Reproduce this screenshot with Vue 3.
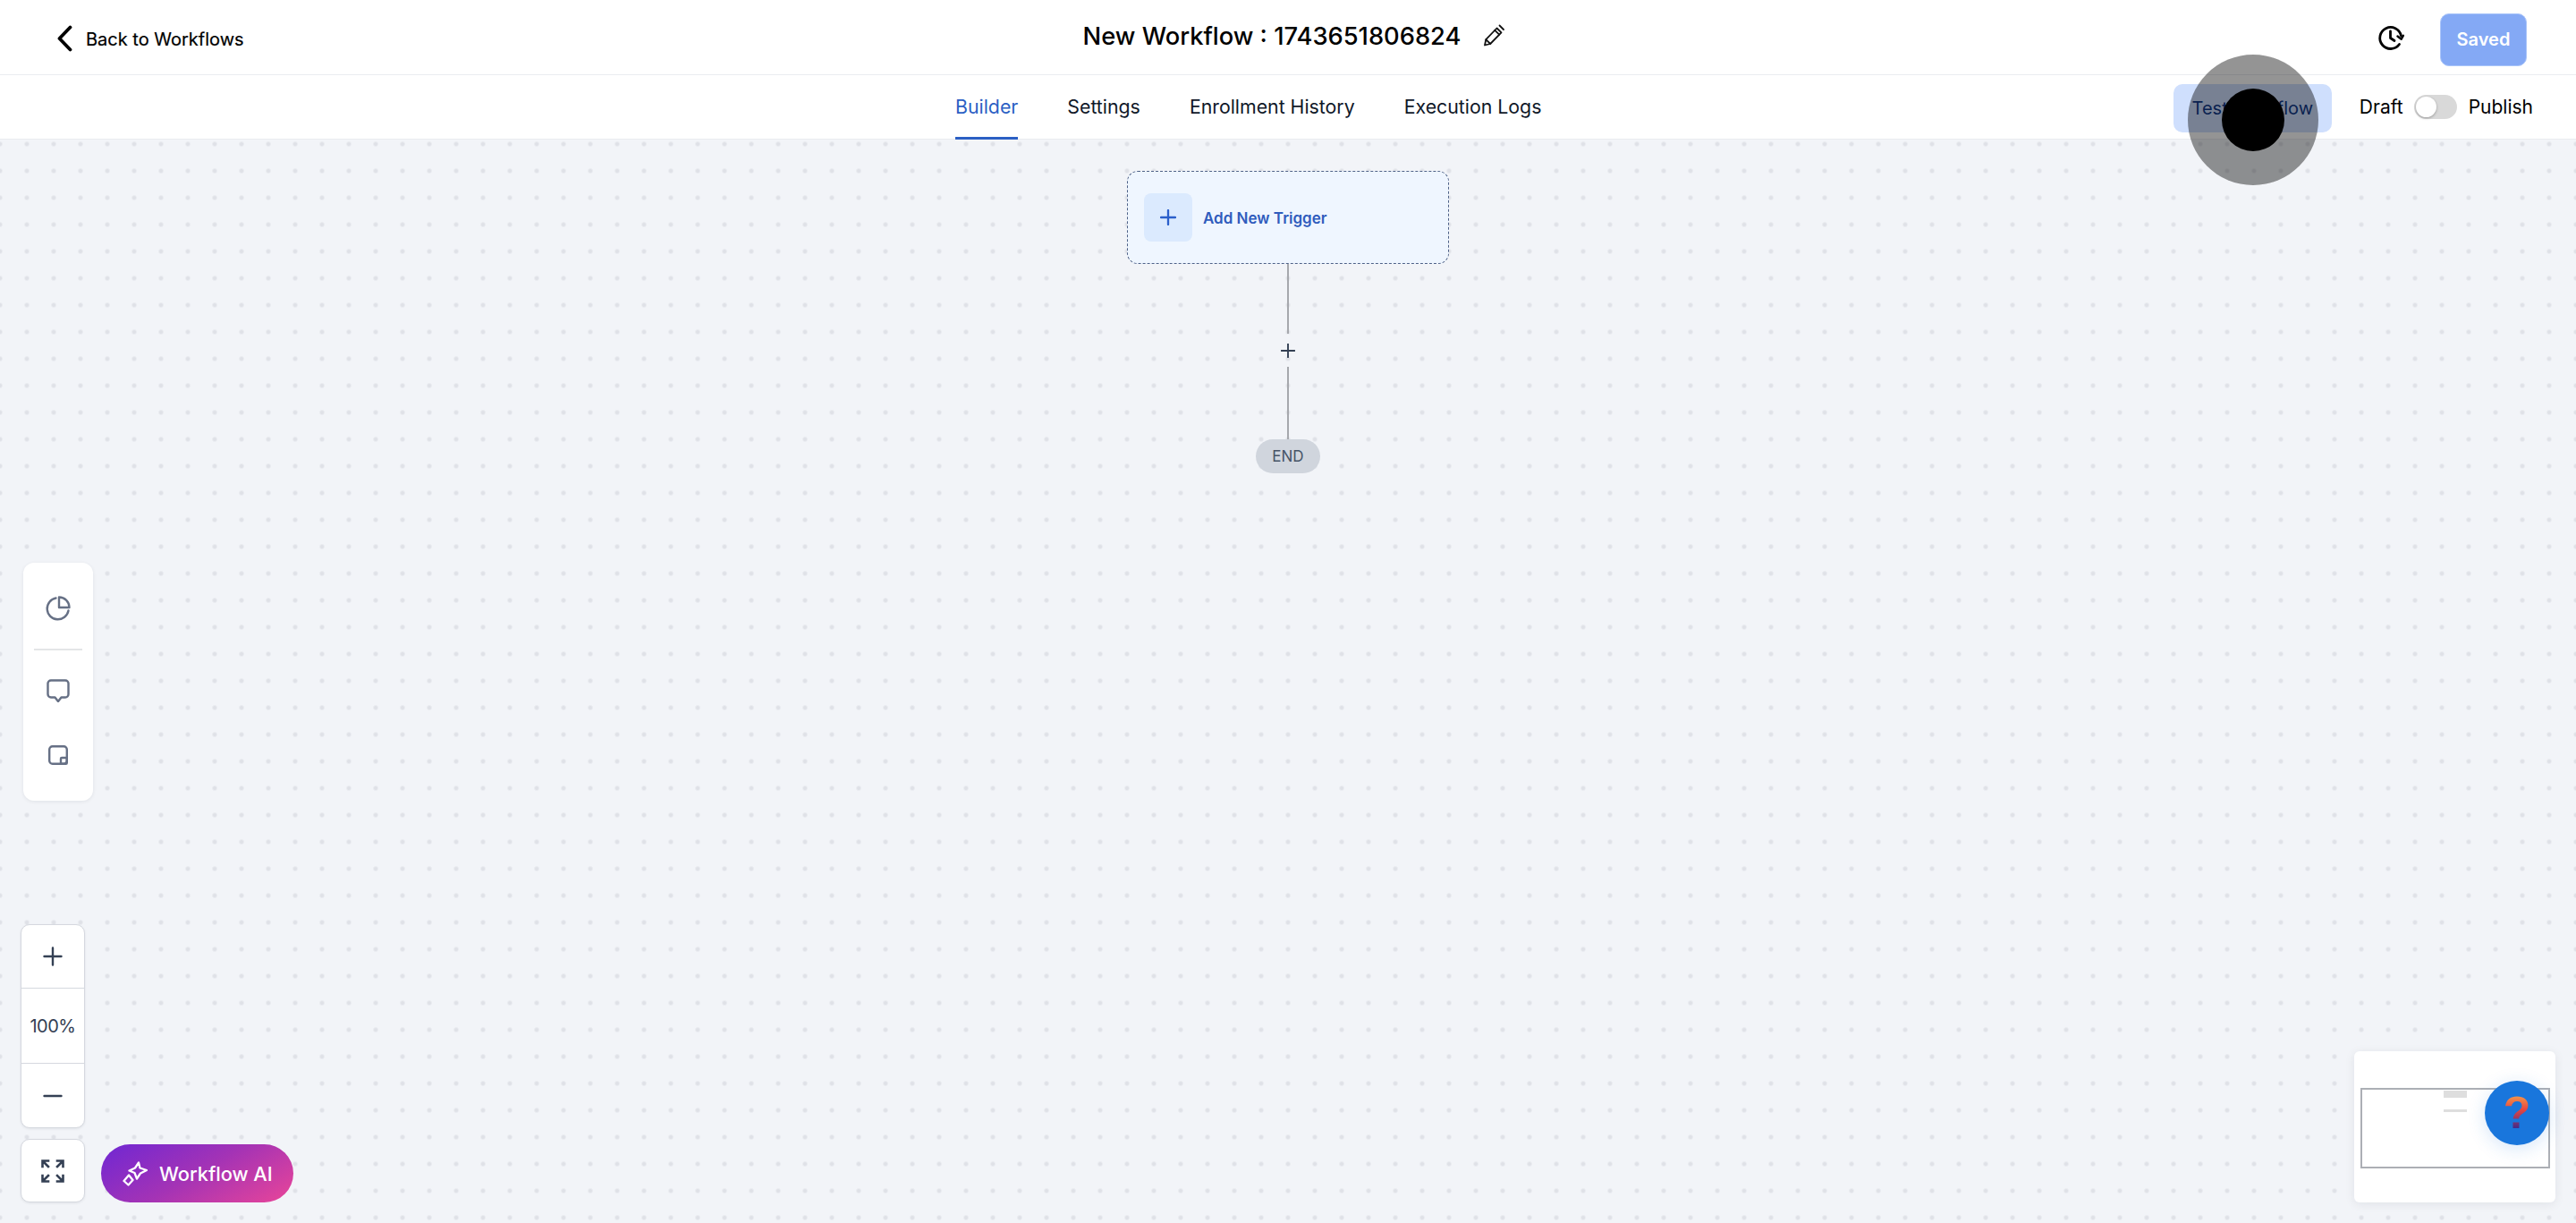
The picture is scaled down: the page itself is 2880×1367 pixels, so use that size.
<script setup>
const tabs = ['Builder', 'Settings', 'Enrollment History', 'Execution Logs']
</script>

<template>
  <div class="page">
    <header class="top">
      <a class="back">
        <svg width="18" height="30" viewBox="0 0 18 30" fill="none"><path d="M15.500 2.500 3.500 15l12 12.500" stroke="#000" stroke-width="3.800" stroke-linecap="round" stroke-linejoin="round"/></svg>
        <span>Back to Workflows</span>
      </a>
      <div class="title">
        <h1>New Workflow : 1743651806824</h1>
        <svg width="26" height="26" viewBox="0 0 26 26" fill="none" stroke="#111" stroke-width="1.800" stroke-linejoin="round" stroke-linecap="round"><path d="M3 23.500l1.300-6.300L16.500 4.500l5 4.800L9.200 22z"/><path d="M4.300 17.200 9.200 22M14.200 6.900l5 4.800M19.500 1.500l4.500 4.500"/></svg>
      </div>
      <div class="actions">
        <svg width="30" height="30" viewBox="0 0 30 30" fill="none" stroke="#000" stroke-width="2.800" stroke-linecap="round" stroke-linejoin="round"><path d="M26.500 13A12 12 0 1 0 24.500 22.500"/><path d="M14.500 8v7.500l4.500 3"/><path d="m22.500 13.500 4.200 3.200 2.300-4" stroke-width="2.400"/></svg>
        <button class="saved">Saved</button>
      </div>
    </header>

    <nav class="sub">
      <div class="tabs">
        <a v-for="(t, i) in tabs" :key="t" class="tab" :class="{ active: i === 0 }">{{ t }}</a>
      </div>
      <div class="controls">
        <button class="test">Test Workflow</button>
        <span class="lbl">Draft</span>
        <span class="toggle"><i></i></span>
        <span class="lbl">Publish</span>
      </div>
    </nav>

    <main class="canvas">
      <div class="flow">
        <div class="trigger">
          <span class="tbox">
            <svg width="18" height="18" viewBox="0 0 18 18" stroke="#2B5FCB" stroke-width="2.300" stroke-linecap="round"><path d="M9 1v16M1 9h16"/></svg>
          </span>
          <span class="ttext">Add New Trigger</span>
        </div>
        <div class="line l1"></div>
        <svg class="addp" width="16" height="16" viewBox="0 0 16 16" stroke="#344054" stroke-width="1.900" stroke-linecap="round"><path d="M8 .5v15M.5 8h15"/></svg>
        <div class="line l2"></div>
        <div class="end">END</div>
      </div>

      <aside class="tools">
        <svg width="28" height="28" viewBox="0 0 28 28" fill="none" stroke="#667085" stroke-width="2.400" stroke-linecap="round" stroke-linejoin="round"><path d="M11.500 2.500A12 12 0 1 0 25.500 16.500"/><path d="M15 1.500A11.500 11.500 0 0 1 26.500 13H15z"/></svg>
        <hr />
        <svg class="t2" width="26" height="26" viewBox="0 0 26 26" fill="none" stroke="#667085" stroke-width="2.400" stroke-linejoin="round"><path d="M5 1.500h16A3.500 3.500 0 0 1 24.500 5v12a3.500 3.500 0 0 1-3.500 3.500h-4.500L13 25l-3.500-4.500H5A3.500 3.500 0 0 1 1.500 17V5A3.500 3.500 0 0 1 5 1.500z"/></svg>
        <svg class="t3" width="22" height="22" viewBox="0 0 22 22" fill="none" stroke="#667085" stroke-width="2.400" stroke-linejoin="round"><rect x="1.200" y="1.200" width="19.600" height="19.600" rx="3.500"/><rect x="14" y="14" width="6.800" height="6.800" rx="1"/></svg>
      </aside>

      <div class="zoom">
        <button class="zbtn z1"><svg width="22" height="22" viewBox="0 0 22 22" stroke="#344054" stroke-width="2.400" stroke-linecap="round"><path d="M11 1.500v19M1.500 11h19"/></svg></button>
        <div class="pct">100%</div>
        <button class="zbtn z3"><svg width="22" height="4" viewBox="0 0 22 4" stroke="#344054" stroke-width="2.400" stroke-linecap="round"><path d="M1.500 2h19"/></svg></button>
      </div>

      <button class="fit">
        <svg width="26" height="26" viewBox="0 0 26 26" fill="none" stroke="#344054" stroke-width="2.600" stroke-linecap="square"><path d="M1.500 8V1.500H8M2 2l6 6M24.500 8V1.500H18M24 2l-6 6M1.500 18v6.500H8M2 24l6-6M24.500 18v6.500H18M24 24l-6-6"/></svg>
      </button>

      <button class="ai">
        <svg width="28" height="28" viewBox="0 0 28 28" fill="none" stroke="#fff" stroke-width="2.300" stroke-linejoin="round"><path d="M18 1.500 19.500 7.500 27 10 20 13.500 16 19.500 13.500 13 7.500 10.500 14 7.500z"/><path d="M7 15.500 11.500 21 6.500 26.500 1.500 22z"/></svg>
        <span>Workflow AI</span>
      </button>

      <div class="minimap">
        <div class="view">
          <b class="m1"></b>
          <b class="m2"></b>
        </div>
      </div>
      <div class="help"><span>?</span></div>
      <div class="pointer"><i></i></div>
    </main>
  </div>
</template>

<style>
html, body { margin: 0; background: #fff; overflow: hidden; }
</style>

<style scoped>
.page { width: 2880px; height: 1367px; display: flex; flex-direction: column; font-family: Inter, "Noto Sans", sans-serif; color: #000; overflow: hidden; }
.top { height: 83px; border-bottom: 1px solid #eaecf0; display: grid; grid-template-columns: 1fr auto 1fr; align-items: center; background: #fff; box-sizing: content-box; }
.back { display: flex; align-items: center; gap: 15px; padding-left: 63px; font-size: 20px; font-weight: 400; margin-top: 2px; }
.back span { margin-top: 2px; -webkit-text-stroke: 0.2px #000; }
.title { display: flex; align-items: center; gap: 24px; padding-left: 14px; margin-top: -3px; }
h1 { margin: 0; font-size: 27.300px; font-weight: 450; }
.actions { display: flex; align-items: center; justify-content: flex-end; gap: 40px; padding-right: 55px; }
.saved { width: 97px; height: 59px; margin-top: 5px; border: 1px solid #a9c4f9; border-radius: 10px; background: #84a9f5; color: #fff; font: 600 20px Inter, sans-serif; }
.sub { height: 71px; border-bottom: 1px solid #eaecf0; background: #fff; display: flex; justify-content: space-between; align-items: stretch; padding-left: 1068px; }
.tabs { display: flex; gap: 55px; }
.tab { display: flex; align-items: center; height: 72px; box-sizing: border-box; font-size: 21.300px; font-weight: 400; color: #101828; padding-top: 1px; border-bottom: 3px solid transparent; margin-bottom: -1px; }
.tab.active { color: #2b5fc4; border-bottom-color: #2b5fc4; }
.controls { display: flex; align-items: center; padding-right: 48px; }
.test { width: 177px; height: 54px; margin-top: 2px; margin-right: 31px; border: 0; border-radius: 10px; background: #cfdffd; color: #123a8b; font: 400 20px Inter, sans-serif; white-space: nowrap; padding: 0; }
.lbl { font-size: 21px; font-weight: 400; }
.toggle { width: 48px; height: 27px; margin: 0 13px 0 12px; border-radius: 14px; background: #d9d9d9; display: flex; align-items: center; padding-left: 2px; box-sizing: border-box; }
.toggle i { width: 23px; height: 23px; border-radius: 50%; background: #fff; box-shadow: 0 1px 3px rgba(0,0,0,.3); }
.canvas { position: relative; flex: 1; background-color: #f2f4f8; background-image: radial-gradient(circle, #dfe1e7 1.400px, #f2f4f8 3.400px); background-size: 30px 30px; background-position: -15px -10px; }
.flow { display: flex; flex-direction: column; align-items: center; padding-top: 35px; }
.trigger { width: 360px; height: 104px; box-sizing: border-box; border: 1px dashed #4f6288; border-radius: 12px; background: #eff6ff; display: flex; align-items: center; padding-left: 18px; gap: 12px; }
.tbox { width: 54px; height: 54px; border-radius: 8px; background: #dbeafe; display: flex; align-items: center; justify-content: center; }
.ttext { font-size: 17px; font-weight: 600; color: #2f5cbd; margin-top: 1px; }
.line { width: 2px; background: #a6a8ad; }
.l1 { height: 78px; }
.addp { margin: 11px 0 10px; }
.l2 { height: 81px; }
.end { width: 72px; height: 38px; border-radius: 19px; background: #d0d5dd; color: #475467; font-size: 17px; display: flex; align-items: center; justify-content: center; }
.tools { position: absolute; left: 26px; top: 473px; width: 78px; height: 266px; border-radius: 12px; background: #fff; box-shadow: 0 1px 4px rgba(16,24,40,.08); display: flex; flex-direction: column; align-items: center; padding-top: 37px; box-sizing: border-box; }
.tools hr { width: 54px; height: 2px; border: 0; margin: 31px 0 0; background: #e4e5e7; }
.t2 { margin-top: 32px; }
.t3 { margin-top: 48px; }
.zoom { position: absolute; left: 23px; top: 877px; width: 72px; height: 228px; box-sizing: border-box; border: 1px solid #d5d8df; border-radius: 10px; background: #fff; display: flex; flex-direction: column; box-shadow: 0 1px 3px rgba(16,24,40,.08); }
.zbtn { border: 0; background: none; padding: 0; display: flex; align-items: center; justify-content: center; }
.z1 { height: 70px; border-bottom: 1px solid #d5d8df; box-sizing: content-box; }
.pct { height: 83px; display: flex; align-items: center; justify-content: center; font-size: 20px; letter-spacing: -0.5px; color: #344054; }
.z3 { flex: 1; border-top: 1px solid #d5d8df; }
.fit { position: absolute; left: 23px; top: 1117px; width: 72px; height: 71px; box-sizing: border-box; border: 1px solid #d5d8df; border-radius: 10px; background: #fff; display: flex; align-items: center; justify-content: center; padding: 0; box-shadow: 0 1px 3px rgba(16,24,40,.08); }
.ai { position: absolute; left: 113px; top: 1123px; width: 215px; height: 65px; border: 0; border-radius: 33px; background: linear-gradient(150deg, #6f27d3 0%, #a433b5 50%, #ea4598 100%); color: #fff; font: 500 21.800px Inter, sans-serif; display: flex; align-items: center; gap: 13px; padding: 0 0 0 24px; box-sizing: border-box; }
.minimap { position: absolute; left: 2632px; top: 1019px; width: 225px; height: 169px; border-radius: 6px; background: #fff; box-shadow: 0 2px 12px rgba(16,24,40,.08); display: flex; align-items: center; justify-content: center; }
.view { width: 212px; height: 90px; box-sizing: border-box; border: 2px solid #acafb5; margin-top: 2px; padding: 1px 0 0 91px; display: flex; flex-direction: column; }
.m1 { width: 26px; height: 8px; background: #dedede; }
.m2 { width: 26px; height: 3px; margin-top: 13px; background: #dedede; }
.help { position: absolute; left: 2778px; top: 1052px; width: 72px; height: 72px; border-radius: 50%; background: #1976dc; box-shadow: 0 4px 20px rgba(25,118,220,.18); display: flex; align-items: center; justify-content: center; }
.help span { font: 700 50px "Liberation Sans", sans-serif; line-height: 1; background: linear-gradient(180deg, #f5a04c 8%, #e8463f 42%, #3f2a8c 85%); -webkit-background-clip: text; background-clip: text; color: transparent; }
.pointer { position: absolute; left: 2446px; top: -95px; width: 146px; height: 146px; border-radius: 50%; background: rgba(0,0,0,.42); display: flex; align-items: center; justify-content: center; }
.pointer i { width: 70px; height: 70px; border-radius: 50%; background: #000; }
</style>
